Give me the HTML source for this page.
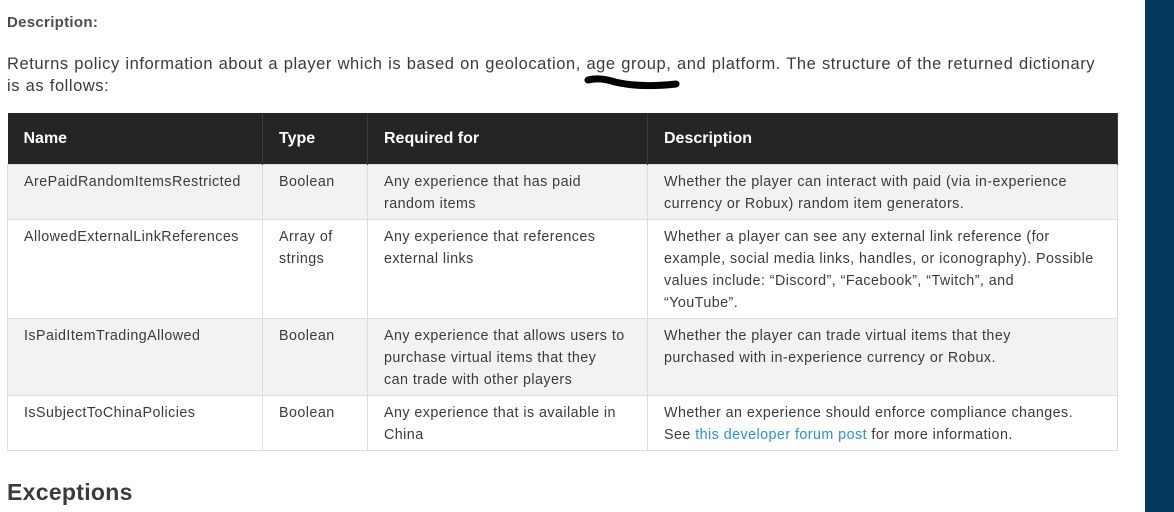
<!DOCTYPE html>
<html><head><meta charset="utf-8"><style>
body{margin:0;width:1174px;height:512px;background:#fff;position:relative;overflow:hidden;font-family:"Liberation Sans",sans-serif;color:#393b3d}
.bar{position:absolute;left:1145px;top:0;width:29px;height:512px;background:#033a5c}
.h{position:absolute;left:7px;top:14px;font-size:15px;font-weight:bold;color:#4a4c4e;letter-spacing:0.3px}
.p{position:absolute;left:7px;top:53px;width:1105px;font-size:16.5px;line-height:22px;color:#393b3d;letter-spacing:0.55px;word-spacing:0.5px}
table{position:absolute;left:7px;top:113px;width:1111px;border-collapse:collapse;table-layout:fixed;font-size:14.3px;line-height:22px;letter-spacing:0.45px}
th{background:#232527;color:#fff;text-align:left;font-size:16px;height:51px;padding:0 16px;border-right:1px solid #3a3c3e;letter-spacing:0}
td{vertical-align:top;padding:6px 16px 4px 16px;border:1px solid #dcdcdc}
tr.g td{background:#f2f2f2}
a{color:#2f8fd0;text-decoration:none}
.ex{position:absolute;left:7px;top:479px;font-size:23px;font-weight:bold;color:#393b3d;letter-spacing:0.3px}
</style></head><body>
<div class="h">Description:</div>
<div class="p">Returns policy information about a player which is based on geolocation, age group, and platform. The structure of the returned dictionary<br>is as follows:</div>
<svg style="position:absolute;left:0;top:0" width="1174" height="512"><path d="M588 80 Q600 77 615 82 Q640 88 676 84" stroke="#000" stroke-width="7" fill="none" stroke-linecap="round"/></svg>
<table>
<colgroup><col style="width:255px"><col style="width:105px"><col style="width:280px"><col></colgroup>
<tr><th>Name</th><th>Type</th><th>Required for</th><th>Description</th></tr>
<tr class="g"><td>ArePaidRandomItemsRestricted</td><td>Boolean</td><td>Any experience that has paid random items</td><td>Whether the player can interact with paid (via in-experience currency or Robux) random item generators.</td></tr>
<tr><td>AllowedExternalLinkReferences</td><td>Array of strings</td><td>Any experience that references external links</td><td>Whether a player can see any external link reference (for<br>example, social media links, handles, or iconography). Possible<br>values include: “Discord”, “Facebook”, “Twitch”, and<br>“YouTube”.</td></tr>
<tr class="g"><td>IsPaidItemTradingAllowed</td><td>Boolean</td><td>Any experience that allows users to purchase virtual items that they<br>can trade with other players</td><td>Whether the player can trade virtual items that they<br>purchased with in-experience currency or Robux.</td></tr>
<tr><td>IsSubjectToChinaPolicies</td><td>Boolean</td><td>Any experience that is available in China</td><td>Whether an experience should enforce compliance changes. See <a>this developer forum post</a> for more information.</td></tr>
</table>
<div class="ex">Exceptions</div>
<div class="bar"></div>
</body></html>
